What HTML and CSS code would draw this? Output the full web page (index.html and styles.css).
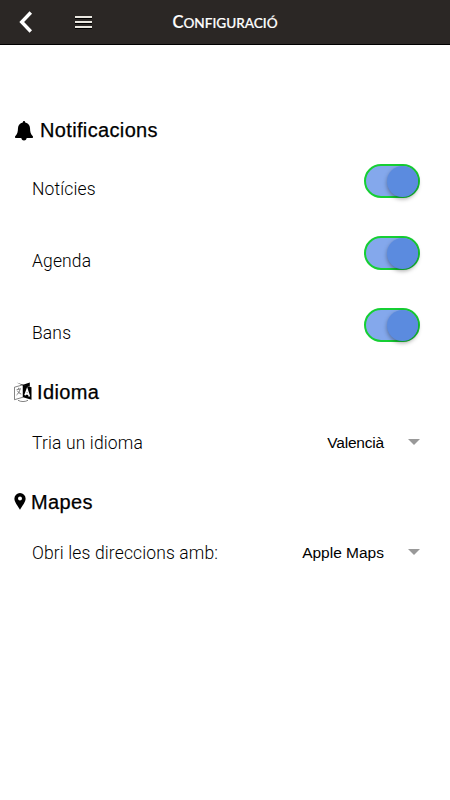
FILE: index.html
```
<!DOCTYPE html>
<html lang="ca">

<head>
    <meta charset="UTF-8">
    <meta name="viewport" content="width=device-width, initial-scale=1.0">
    <title>Configuració</title>
    <link rel="stylesheet" href="styles.css">
</head>

<body>
<header class="navbar">
    <button class="nav-btn back" aria-label="Enrere">
        <svg width="16" height="24" viewBox="0 0 16 24"><path d="M12.800 2.500 3.700 12l9.100 9.500" /></svg>
    </button>
    <button class="nav-btn menu" aria-label="Menú">
        <span></span>
        <span></span>
        <span></span>
    </button>
    <h1>Configuració</h1>
</header>

<main>
    <!-- Notifications -->
    <section>
        <h2>
            <svg class="icon-bell" width="18" height="20" viewBox="0 0 18 20">
                <path d="M9 0c.8 0 1.200.7 1.200 1.500C13.200 2.200 14.800 4.300 15 7c.2 4 .5 6 2.800 8.200.5.5.4 1.800-.5 1.800H.7c-.9 0-1-1.300-.5-1.800C2.500 13 2.800 11 3 7c.2-2.700 1.800-4.800 4.800-5.500C7.800.7 8.200 0 9 0zM6.300 16.500h5.400c0 1.800-1.100 3-2.700 3s-2.700-1.200-2.700-3z" />
            </svg>
            <span>Notificacions</span>
        </h2>
        <div class="row switch-row">
            <span class="label">Notícies</span>
            <span class="switch"><span class="knob"></span></span>
        </div>
        <div class="row switch-row">
            <span class="label">Agenda</span>
            <span class="switch"><span class="knob"></span></span>
        </div>
        <div class="row switch-row">
            <span class="label">Bans</span>
            <span class="switch"><span class="knob"></span></span>
        </div>
    </section>

    <!-- Language -->
    <section>
        <h2>
            <svg class="icon-lang" width="18" height="20" viewBox="0 0 18 20">
                <path d="M2.500.5 9 2.800 15.800.5v4L9 3.500z" />
                <path class="page" d="M.5 5.200 9 2.800v12.400L.5 17.700z" />
                <path d="M9 2.800 17.500 5.200v12.500L9 15.200z" />
                <path class="thin" d="M2.500 7.800 7 6.700M4.600 5.800v1.300M6 7.200c-.4 2.500-1.700 4.500-3.500 5.800M3.500 8.800c.8 1.600 2 2.700 3.800 3.300M4 18.300c3 1.700 7 1.700 10 0" />
                <path class="letter" d="m11 13.300 2.100-5.800 2.300 7M11.700 11.600l2.900.7" />
            </svg>
            <span>Idioma</span>
        </h2>
        <div class="row select-row">
            <span class="label">Tria un idioma</span>
            <span class="select">Valencià</span>
        </div>
    </section>

    <!-- Maps -->
    <section>
        <h2>
            <svg class="icon-pin" width="12" height="17" viewBox="0 0 12 17">
                <path fill-rule="evenodd" d="M6 0a5.600 5.600 0 0 1 5.600 5.700c0 3.500-3.200 6.600-5.600 11.100C3.600 12.300.4 9.200.4 5.700A5.600 5.600 0 0 1 6 0zm0 3.600a2 2 0 1 0 0 4 2 2 0 0 0 0-4z" />
            </svg>
            <span>Mapes</span>
        </h2>
        <div class="row select-row">
            <span class="label">Obri les direccions amb:</span>
            <span class="select maps-select">Apple Maps</span>
        </div>
    </section>
</main>
</body>

</html>
```
FILE: styles.css
```
body {
    margin: 0;
    background-color: #fff;
    font-family: Roboto, sans-serif;
}

.navbar {
    display: grid;
    grid-template-columns: 52px 70px 206px;
    align-items: center;
    height: 44px;
    background-color: #2b2725;
    border-bottom: 1px solid #000;
}

.nav-btn {
    display: flex;
    padding: 0;
    border: none;
    background: none;
}

.back {
    margin-left: 18px;
}

.back path {
    fill: none;
    stroke: #fff;
    stroke-width: 3.4;
}

.menu {
    flex-direction: column;
    gap: 3px;
    width: 18px;
    margin-left: 23px;
}

.menu span {
    width: 17px;
    height: 2px;
    background-color: #e9e6df;
    box-shadow: 0 1px 0 #000;
}

h1 {
    margin: 0;
    color: #fff;
    font-family: Lato, sans-serif;
    font-size: 13.6px;
    font-weight: 500;
    line-height: 20px;
    text-align: center;
    text-transform: uppercase;
    -webkit-text-stroke: 0.2px #fff;
}

h1::first-letter {
    font-size: 16.5px;
}

main {
    padding-top: 66px;
}

h2 {
    display: flex;
    align-items: center;
    height: 39px;
    margin: 0;
    padding-left: 15px;
    font-family: "Liberation Sans", sans-serif;
    font-size: 20px;
    font-weight: 400;
    letter-spacing: 0.35px;
    -webkit-text-stroke: 0.25px #000;
}

.icon-bell {
    margin-right: 7px;
}

.icon-lang {
    margin: 0 5px 0 -1px;
}

.icon-pin {
    margin: -1px 5px 0 -1px;
}

.page,
.thin {
    fill: none;
    stroke: #333;
    stroke-width: 0.6;
}

.letter {
    fill: none;
    stroke: #fff;
    stroke-width: 1.6;
}

.row {
    display: flex;
    align-items: center;
    justify-content: space-between;
    padding: 0 30px 0 32px;
}

.switch-row {
    height: 72px;
}

.select-row {
    height: 47px;
    margin-bottom: 10px;
}

section + section {
    margin-top: -1px;
}

section + section h2 {
    height: 54px;
}

.label {
    color: #000;
    font-size: 17.5px;
    font-weight: 300;
    letter-spacing: 0.13px;
}

.switch-row .label {
    padding-top: 5px;
}

.switch {
    box-sizing: border-box;
    display: flex;
    align-items: center;
    justify-content: flex-end;
    width: 56px;
    height: 34px;
    margin-top: -10px;
    border: 2px solid #16cf34;
    border-radius: 17px;
    background-color: #84a8ec;
}

.knob {
    width: 31px;
    height: 31px;
    border-radius: 50%;
    background-color: #5b8bdf;
    box-shadow: 0 2px 4px rgba(0, 0, 0, 0.35);
}

.select {
    display: flex;
    align-items: center;
    font-family: "Liberation Sans", sans-serif;
    font-size: 15.5px;
    letter-spacing: -0.2px;
}

.maps-select {
    letter-spacing: 0;
}

.select::after {
    content: "";
    margin: -2px 0 0 24px;
    border: 6px solid transparent;
    border-top-color: #999;
    border-bottom: none;
}
```
